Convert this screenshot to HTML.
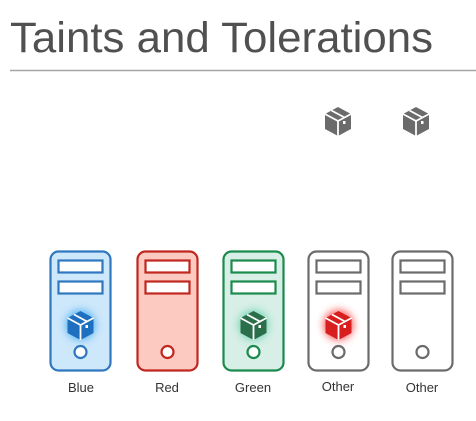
<!DOCTYPE html>
<html><head><meta charset="utf-8"><style>
html,body{margin:0;padding:0;background:#fff;width:476px;height:421px;overflow:hidden}
svg{display:block}
</style></head><body>
<svg width="476" height="421" viewBox="0 0 476 421" xmlns="http://www.w3.org/2000/svg">
<defs>
<g id="cube">
<path d="M0,-14 L13,-7 L13,8 L0,15 L-13,8 L-13,-7 Z"/>
<path d="M-13,-7 L0,0 L13,-7 M0,0 L0,15 M-6.5,-10.5 L6.5,-3.5" stroke="#fff" stroke-width="1.8" fill="none"/>
<rect x="5" y="0" width="2.5" height="3" fill="#fff"/>
</g>
<filter id="glow" x="-80%" y="-80%" width="260%" height="260%"><feGaussianBlur stdDeviation="4"/></filter>
</defs>
<text x="10" y="52" font-family="Liberation Sans, sans-serif" font-size="43" fill="#505050" textLength="423" lengthAdjust="spacingAndGlyphs">Taints and Tolerations</text>
<line x1="10" y1="70.5" x2="476" y2="70.5" stroke="#a6a6a6" stroke-width="1.5"/>

<g fill="#6b6b6b"><use href="#cube" transform="translate(338,121)"/><use href="#cube" transform="translate(416,121)"/></g>

<!-- Blue -->
<rect x="50.5" y="251.5" width="60" height="119" rx="8" fill="#cde7fb" stroke="#2f78c0" stroke-width="2.2"/>
<rect x="58.5" y="260.5" width="44" height="12" fill="#fff" stroke="#2f78c0" stroke-width="2.2"/>
<rect x="58.5" y="281.5" width="44" height="12" fill="#fff" stroke="#2f78c0" stroke-width="2.2"/>
<circle cx="80.5" cy="325" r="15" fill="#3aa8f0" opacity="0.8" filter="url(#glow)"/>
<g fill="#1f6fc1"><use href="#cube" transform="translate(80.5,325)"/></g>
<circle cx="80.5" cy="352" r="6" fill="#fff" stroke="#2f78c0" stroke-width="2.2"/>
<!-- Red -->
<rect x="137.5" y="251.5" width="60" height="119" rx="8" fill="#fdcac2" stroke="#c0271f" stroke-width="2.2"/>
<rect x="145.5" y="260.5" width="44" height="12" fill="#fff" stroke="#c0271f" stroke-width="2.2"/>
<rect x="145.5" y="281.5" width="44" height="12" fill="#fff" stroke="#c0271f" stroke-width="2.2"/>
<circle cx="167.5" cy="352" r="6" fill="#fff" stroke="#c0271f" stroke-width="2.2"/>
<!-- Green -->
<rect x="223.5" y="251.5" width="60" height="119" rx="8" fill="#d7efe6" stroke="#1b8a4d" stroke-width="2.2"/>
<rect x="231.5" y="260.5" width="44" height="12" fill="#fff" stroke="#1b8a4d" stroke-width="2.2"/>
<rect x="231.5" y="281.5" width="44" height="12" fill="#fff" stroke="#1b8a4d" stroke-width="2.2"/>
<circle cx="253.5" cy="325" r="15" fill="#5fcfae" opacity="0.8" filter="url(#glow)"/>
<g fill="#2b6e4a"><use href="#cube" transform="translate(253.5,325)"/></g>
<circle cx="253.5" cy="352" r="6" fill="#fff" stroke="#1b8a4d" stroke-width="2.2"/>
<!-- Other 1 -->
<rect x="308.5" y="251.5" width="60" height="119" rx="8" fill="#fff" stroke="#6b6b6b" stroke-width="2.2"/>
<rect x="316.5" y="260.5" width="44" height="12" fill="#fff" stroke="#6b6b6b" stroke-width="2.2"/>
<rect x="316.5" y="281.5" width="44" height="12" fill="#fff" stroke="#6b6b6b" stroke-width="2.2"/>
<circle cx="338.5" cy="325" r="15" fill="#ff3030" opacity="0.8" filter="url(#glow)"/>
<g fill="#d81e1e"><use href="#cube" transform="translate(338.5,325)"/></g>
<circle cx="338.5" cy="352" r="6" fill="#fff" stroke="#6b6b6b" stroke-width="2.2"/>
<!-- Other 2 -->
<rect x="392.5" y="251.5" width="60" height="119" rx="8" fill="#fff" stroke="#6b6b6b" stroke-width="2.2"/>
<rect x="400.5" y="260.5" width="44" height="12" fill="#fff" stroke="#6b6b6b" stroke-width="2.2"/>
<rect x="400.5" y="281.5" width="44" height="12" fill="#fff" stroke="#6b6b6b" stroke-width="2.2"/>
<circle cx="422.5" cy="352" r="6" fill="#fff" stroke="#6b6b6b" stroke-width="2.2"/>

<g font-family="Liberation Sans, sans-serif" font-size="13" fill="#333" text-anchor="middle">
<text x="81" y="392">Blue</text>
<text x="167" y="392">Red</text>
<text x="253" y="392">Green</text>
<text x="338" y="391">Other</text>
<text x="422" y="392">Other</text>
</g>
</svg>
</body></html>
